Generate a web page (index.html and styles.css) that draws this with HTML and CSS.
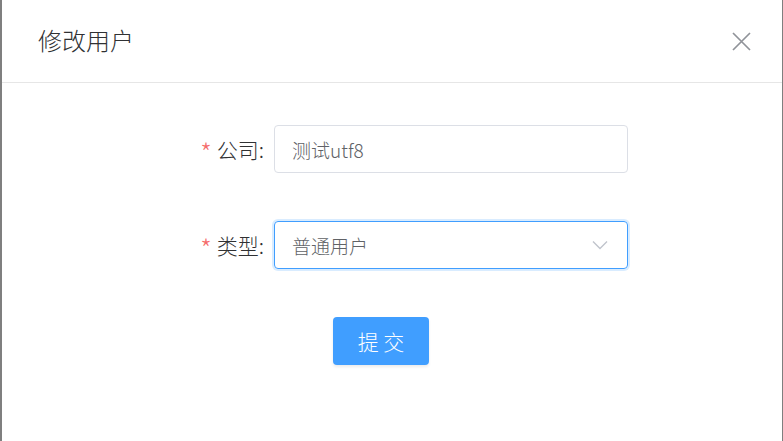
FILE: index.html
```html
<!DOCTYPE html>
<html lang="zh-CN">
<head>
  <meta charset="UTF-8">
  <title>修改用户</title>
  <link rel="stylesheet" href="styles.css">
</head>
<body>
  <div class="dialog">
    <div class="dialog-header">
      <span class="dialog-title">修改用户</span>
      <button class="dialog-close" aria-label="关闭">
        <svg width="19" height="19" viewBox="0 0 19 19"><path d="M1 1L18 18M18 1L1 18" stroke="#909399" stroke-width="1.7" fill="none"/></svg>
      </button>
    </div>

    <form class="dialog-body">
      <div class="form-item">
        <label class="form-label"><span class="required">*</span>公司:</label>
        <div class="input">测试utf8</div>
      </div>
      <div class="form-item">
        <label class="form-label"><span class="required">*</span>类型:</label>
        <div class="input select is-focus">
          <span>普通用户</span>
          <svg class="arrow" width="16" height="10" viewBox="0 0 16 10"><path d="M1 1.5L8 8.5L15 1.5" stroke="#c0c4cc" stroke-width="1.4" fill="none"/></svg>
        </div>
      </div>
      <div class="form-item">
        <div class="form-label"></div>
        <button type="button" class="btn-primary">提 交</button>
      </div>
    </form>
  </div>
</body>
</html>
```

FILE: styles.css
```css
* { margin: 0; padding: 0; box-sizing: border-box; }
body { background: #7f7f7f; font-family: "Noto Sans CJK SC", "Noto Sans", sans-serif; color: #303133; height: 441px; overflow: hidden; }

.dialog { margin-left: 2px; width: 780px; height: 441px; background: #fff; }

.dialog-header { height: 83px; border-bottom: 1px solid #e6e6e6; display: flex; align-items: center; justify-content: space-between; padding: 0 31px 0 36px; }
.dialog-title { font-size: 24px; font-weight: 300; color: #303133; line-height: 1; margin-top: -2px; }
.dialog-close { border: none; background: none; width: 19px; height: 19px; display: flex; margin-top: 1px; }

.dialog-body { padding: 42px 0 0 172px; }
.form-item { display: flex; align-items: center; margin-bottom: 48px; }
.form-label { width: 100px; padding-right: 10px; text-align: right; font-size: 21px; font-weight: 300; color: #303133; white-space: nowrap; display: flex; align-items: center; justify-content: flex-end; }
.required { color: #f56c6c; margin-right: 5px; font-size: 26px; line-height: 1; margin-top: 6px; }

.input { width: 354px; height: 48px; border: 1px solid #dcdfe6; border-radius: 4px; padding: 0 17px; font-size: 19px; font-weight: 300; color: #606266; display: flex; align-items: center; }
.select { justify-content: space-between; }
.select .arrow { margin-right: 2px; }
.is-focus { border-color: #409eff; box-shadow: 0 0 0 2px rgba(64, 158, 255, 0.2); }

.btn-primary { margin-left: 59px; width: 96px; height: 48px; border: none; border-radius: 4px; background: #409eff; color: #fff; font-family: inherit; font-size: 21px; font-weight: 300; box-shadow: 0 2px 3px rgba(0, 0, 0, 0.08); }
```
